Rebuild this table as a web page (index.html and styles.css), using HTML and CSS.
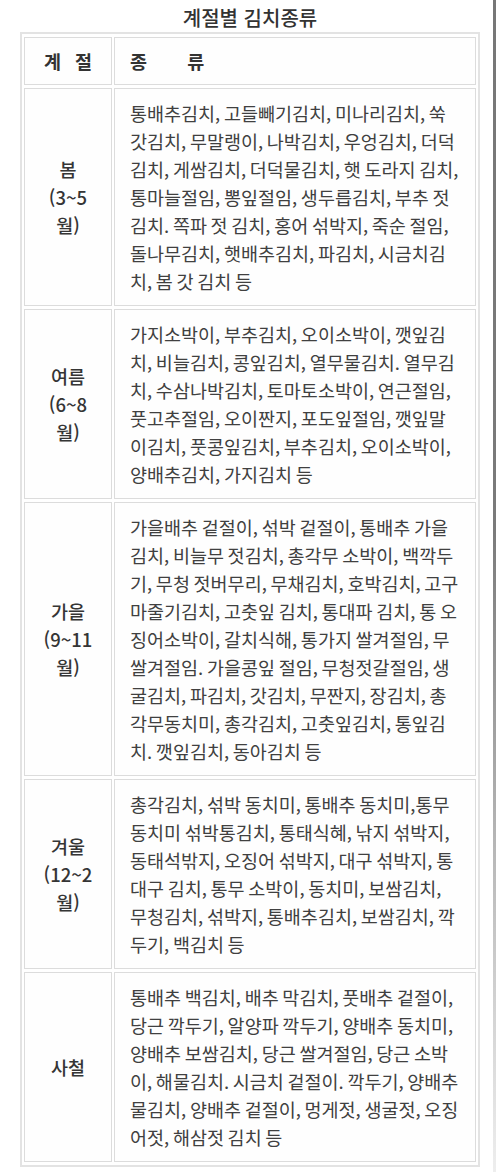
FILE: index.html
```html
<!DOCTYPE html>
<html lang="ko">
<head>
<meta charset="utf-8">
<title>계절별 김치종류</title>
<link rel="stylesheet" href="styles.css">
</head>
<body>
<div class="page">
  <h1 class="title">계절별 김치종류</h1>
  <table class="kimchi">
    <colgroup>
      <col class="col-season">
      <col class="col-kinds">
    </colgroup>
    <thead>
      <tr>
        <th class="season head-season">계 절</th>
        <th class="kinds head-kinds">종 류</th>
      </tr>
    </thead>
    <tbody>
      <tr>
        <td class="season">봄<br>(3~5<br>월)</td>
        <td class="kinds">통배추김치, 고들빼기김치, 미나리김치, 쑥<br>갓김치, 무말랭이, 나박김치, 우엉김치, 더덕<br>김치, 게쌈김치, 더덕물김치, 햇 도라지 김치,<br>통마늘절임, 뽕잎절임, 생두릅김치, 부추 젓<br>김치. 쪽파 젓 김치, 홍어 섞박지, 죽순 절임,<br>돌나무김치, 햇배추김치, 파김치, 시금치김<br>치, 봄 갓 김치 등</td>
      </tr>
      <tr>
        <td class="season">여름<br>(6~8<br>월)</td>
        <td class="kinds">가지소박이, 부추김치, 오이소박이, 깻잎김<br>치, 비늘김치, 콩잎김치, 열무물김치. 열무김<br>치, 수삼나박김치, 토마토소박이, 연근절임,<br>풋고추절임, 오이짠지, 포도잎절임, 깻잎말<br>이김치, 풋콩잎김치, 부추김치, 오이소박이,<br>양배추김치, 가지김치 등</td>
      </tr>
      <tr>
        <td class="season">가을<br>(9~11<br>월)</td>
        <td class="kinds">가을배추 겉절이, 섞박 겉절이, 통배추 가을<br>김치, 비늘무 젓김치, 총각무 소박이, 백깍두<br>기, 무청 젓버무리, 무채김치, 호박김치, 고구<br>마줄기김치, 고춧잎 김치, 통대파 김치, 통 오<br>징어소박이, 갈치식해, 통가지 쌀겨절임, 무<br>쌀겨절임. 가을콩잎 절임, 무청젓갈절임, 생<br>굴김치, 파김치, 갓김치, 무짠지, 장김치, 총<br>각무동치미, 총각김치, 고춧잎김치, 통잎김<br>치. 깻잎김치, 동아김치 등</td>
      </tr>
      <tr>
        <td class="season">겨울<br>(12~2<br>월)</td>
        <td class="kinds">총각김치, 섞박 동치미, 통배추 동치미,통무<br>동치미 섞박통김치, 통태식혜, 낚지 섞박지,<br>동태석밖지, 오징어 섞박지, 대구 섞박지, 통<br>대구 김치, 통무 소박이, 동치미, 보쌈김치,<br>무청김치, 섞박지, 통배추김치, 보쌈김치, 깍<br>두기, 백김치 등</td>
      </tr>
      <tr>
        <td class="season">사철</td>
        <td class="kinds">통배추 백김치, 배추 막김치, 풋배추 겉절이,<br>당근 깍두기, 알양파 깍두기, 양배추 동치미,<br>양배추 보쌈김치, 당근 쌀겨절임, 당근 소박<br>이, 해물김치. 시금치 겉절이. 깍두기, 양배추<br>물김치, 양배추 겉절이, 멍게젓, 생굴젓, 오징<br>어젓, 해삼젓 김치 등</td>
      </tr>
    </tbody>
  </table>
  <div class="edge"></div>
</div>
</body>
</html>
```

FILE: styles.css
```css
html, body {
  margin: 0;
  padding: 0;
  background: #ffffff;
}

body {
  font-family: "Noto Sans CJK KR", "Noto Sans", sans-serif;
  color: #3f3f3f;
}

.page {
  position: relative;
  width: 500px;
  min-height: 1172px;
}

.title {
  margin: 0;
  padding-top: 4px;
  height: 28px;
  line-height: 28px;
  font-size: 20px;
  font-weight: 500;
  color: #333333;
  text-align: center;
}

.kimchi {
  margin-left: 20px;
  width: 460px;
  table-layout: fixed;
  border: 2px solid #e3e3e3;
  border-collapse: separate;
  border-spacing: 2px 3px;
  font-size: 18.5px;
  line-height: 28px;
}

.col-season {
  width: 88px;
}

.kimchi th,
.kimchi td {
  border: 1px solid #dcdcdc;
  background: #fefefe;
}

.season {
  text-align: center;
  vertical-align: middle;
  color: #353535;
  font-weight: 500;
  padding: 10px 0;
}

.kinds {
  text-align: left;
  padding: 10px 2px 10px 15px;
  white-space: nowrap;
  word-spacing: -1.5px;
  color: #404040;
  font-weight: 400;
}

.kimchi thead th {
  height: 46px;
  padding-top: 0;
  padding-bottom: 0;
  line-height: 46px;
  font-weight: 700;
  color: #333333;
}

.head-season {
  word-spacing: 9px;
}

.head-kinds {
  word-spacing: 35px;
}

.edge {
  position: absolute;
  top: 0;
  left: 493px;
  width: 3px;
  height: 1172px;
  background: linear-gradient(to bottom, #777777 0%, #7a7a7a 45%, #bdbdbd 75%, #eeeeee 100%);
}
```
